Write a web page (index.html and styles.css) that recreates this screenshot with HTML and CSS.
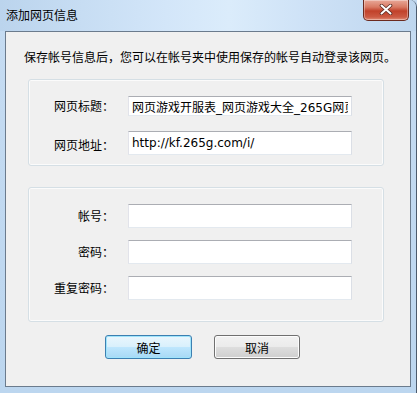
FILE: index.html
```html
<!DOCTYPE html>
<html lang="zh-CN">
<head>
<meta charset="UTF-8">
<title>添加网页信息</title>
<link rel="stylesheet" href="styles.css">
</head>
<body>
<div class="window">
  <div class="titlebar">
    <span class="title">添加网页信息</span>
    <button class="close" title="关闭">
      <svg width="14" height="11" viewBox="0 0 14 11">
        <path d="M2.5 1.5 L11.5 9.5 M11.5 1.5 L2.5 9.5" stroke="#5a2a22" stroke-width="3.6" stroke-linecap="round"/>
        <path d="M2.5 1.5 L11.5 9.5 M11.5 1.5 L2.5 9.5" stroke="#ffffff" stroke-width="2" stroke-linecap="round"/>
      </svg>
    </button>
  </div>

  <div class="client">
    <p class="intro">保存帐号信息后，您可以在帐号夹中使用保存的帐号自动登录该网页。</p>

    <div class="group group-page">
      <label class="field-label">网页标题：</label>
      <input type="text" class="field field-short" value="网页游戏开服表_网页游戏大全_265G网页游戏第一门户">
      <label class="field-label">网页地址：</label>
      <input type="text" class="field" value="http://kf.265g.com/i/">
    </div>

    <div class="group group-account">
      <label class="field-label">帐号：</label>
      <input type="text" class="field">
      <label class="field-label">密码：</label>
      <input type="password" class="field">
      <label class="field-label">重复密码：</label>
      <input type="password" class="field">
    </div>

    <div class="actions">
      <button class="btn btn-default">确定</button>
      <button class="btn btn-cancel">取消</button>
    </div>
  </div>
</div>
</body>
</html>
```

FILE: styles.css
```css
:root {
  --frame: #c3daf1; --frame-dark: #4c5b6d;
  --client-bg: #f0f0f0; --client-edge: #6b7b8d;
  --group-edge: #d5dfe5;
  --text: #000000;
}
* { box-sizing: border-box; margin: 0; padding: 0; }
html, body { width: 417px; height: 393px; overflow: hidden; }
body { font-family: "Noto Sans CJK SC", "Noto Sans", sans-serif; font-size: 12px; color: var(--text); background: var(--frame); }

.window { width: 417px; height: 393px; display: flex; flex-direction: column; background: linear-gradient(to bottom, #c6dcf2, #bcd6ef); border-right: 1px solid var(--frame-dark); border-top-right-radius: 7px; }

.titlebar { height: 31px; flex-shrink: 0; display: flex; align-items: flex-start; background: linear-gradient(90deg, #bbd4ed 0%, #d3e6f9 40%, #dbecfb 55%, #cde1f6 75%, #bed6ee 100%); border-top-right-radius: 7px; }
.title { padding: 7px 0 0 6px; line-height: 16px; font-size: 12px; color: #000; }
.close { margin-left: auto; margin-right: 7px; width: 46px; height: 21px; border: 1px solid #6b2a1f; border-top: none; border-radius: 0 0 5px 5px; background: linear-gradient(to bottom, #e8a898 0%, #d97a64 35%, #c1412a 55%, #cc5a43 85%, #e08e78 100%); box-shadow: inset 0 0 0 1px rgba(255,255,255,0.35); display: flex; align-items: center; justify-content: center; }
.close svg { display: block; margin-top: -1px; }

.client { flex: 1; margin: 0 5px 6px 5px; background: var(--client-bg); border: 1px solid var(--client-edge); }

.intro { margin: 17px 0 0 18px; line-height: 16px; white-space: nowrap; }

.group { margin: 0 0 0 22px; width: 356px; border: 1px solid var(--group-edge); border-radius: 3px; box-shadow: inset 0 0 0 1px #fbfbfb; display: grid; grid-template-columns: 85px 224px; column-gap: 14px; align-items: center; }
.group-page { margin-top: 14px; padding: 16px 0 10px; grid-template-rows: 20px 24px; row-gap: 15px; }
.group-account { margin-top: 21px; padding: 16px 0 21px; grid-template-rows: 24px 24px 24px; row-gap: 12px; }

.field-label { text-align: right; line-height: 16px; white-space: nowrap; }
.group-page .field-label:nth-of-type(2) { margin-top: 4px; }

.field { width: 224px; height: 24px; background: #fff; border: 1px solid #e3e9ef; border-top-color: #abadb3; border-left-color: #e2e3ea; border-right-color: #dbdfe6; padding: 0 3px; font-family: "DejaVu Sans", "Noto Sans CJK SC", sans-serif; font-size: 12px; color: #000; outline: none; }
.field-short { height: 20px; }

.actions { display: flex; gap: 22px; margin: 13px 0 0 99px; }
.btn { height: 24px; border-radius: 3px; font-family: "Noto Sans CJK SC", sans-serif; font-size: 12px; color: #000; cursor: pointer; }
.btn-default { width: 87px; border: 1px solid #3c7fb1; background: linear-gradient(to bottom, #eaf6fd 0%, #d9f0fc 48%, #bee6fd 52%, #a7d9f5 100%); box-shadow: inset 0 0 0 1px #9fe4fb; }
.btn-cancel { width: 86px; border: 1px solid #707070; background: linear-gradient(to bottom, #f2f2f2 0%, #ebebeb 48%, #dddddd 52%, #cfcfcf 100%); box-shadow: inset 0 0 0 1px #fcfcfc; }
```
